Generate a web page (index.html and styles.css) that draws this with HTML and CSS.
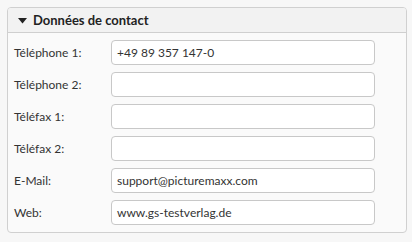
FILE: index.html
```html
<!DOCTYPE html>
<html>
<head>
<meta charset="utf-8">
<link rel="stylesheet" href="styles.css">
</head>
<body>
<section class="panel">
  <header class="panel-head">
    <svg class="caret" width="9" height="6" viewBox="0 0 9 6"><path d="M0 0H9L4.5 5.5Z" fill="#222"/></svg>
    <span>Données de contact</span>
  </header>
  <div class="panel-body">
    <div class="row"><label>Téléphone 1:</label><div class="field">+49 89 357 147-0</div></div>
    <div class="row"><label>Téléphone 2:</label><div class="field"></div></div>
    <div class="row"><label>Téléfax 1:</label><div class="field"></div></div>
    <div class="row"><label>Téléfax 2:</label><div class="field"></div></div>
    <div class="row"><label>E-Mail:</label><div class="field">support@picturemaxx.com</div></div>
    <div class="row"><label>Web:</label><div class="field">www.gs-testverlag.de</div></div>
  </div>
</section>
</body>
</html>
```
FILE: styles.css
```css
* { box-sizing: border-box; }
html, body { margin: 0; padding: 0; }
body {
  background: #f7f7f7;
  font-family: Lato, "Open Sans", sans-serif;
  color: #333;
  width: 412px;
  height: 242px;
  padding: 7px 0 0 7px;
}
.panel {
  width: 400px;
  height: 226px;
  border: 1px solid #d0d0d0;
  border-radius: 4px;
  background: #fafafa;
  overflow: hidden;
}
.panel-head {
  height: 25px;
  background: #f2f2f2;
  border-bottom: 1px solid #cfcfcf;
  display: flex;
  align-items: center;
  padding-left: 10px;
  gap: 6px;
  font-size: 13px;
  font-weight: 700;
  color: #222;
}
.caret { margin-top: 1px; }
.panel-body {
  padding: 7px 0 0 6px;
  display: flex;
  flex-direction: column;
  gap: 7px;
}
.row {
  display: flex;
  align-items: center;
  height: 25px;
}
.row label {
  width: 97px;
  font-size: 12px;
  color: #333;
}
.field {
  width: 264px;
  height: 25px;
  border: 1px solid #c8c8c8;
  border-radius: 4px;
  background: #fff;
  font-size: 12px;
  line-height: 23px;
  padding-left: 5px;
  color: #333;
}
```
